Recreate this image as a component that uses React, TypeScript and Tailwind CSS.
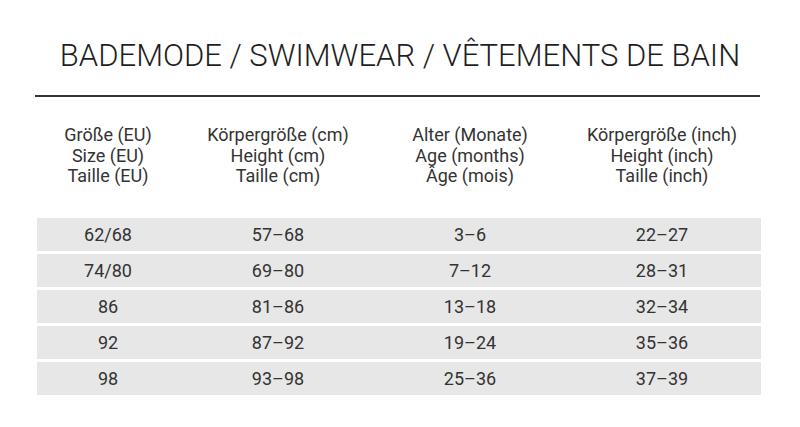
import React from "react";

const rows = [
  ["62/68", "57–68", "3–6", "22–27"],
  ["74/80", "69–80", "7–12", "28–31"],
  ["86", "81–86", "13–18", "32–34"],
  ["92", "87–92", "19–24", "35–36"],
  ["98", "93–98", "25–36", "37–39"],
];

const headers = [
  ["Größe (EU)", "Size (EU)", "Taille (EU)"],
  ["Körpergröße (cm)", "Height (cm)", "Taille (cm)"],
  ["Alter (Monate)", "Age (months)", "Âge (mois)"],
  ["Körpergröße (inch)", "Height (inch)", "Taille (inch)"],
];

const cols = "grid grid-cols-[142px_198px_186px_198px]";

const App = () => {
  return (
    <div className="w-[800px] h-[427px] bg-white font-['Roboto',sans-serif] text-[#333] pt-[38px]">
      <h1 className="text-center text-[31px] leading-[36px] font-light text-[#1f1f1f] tracking-[0px]">
        BADEMODE / SWIMWEAR / VÊTEMENTS DE BAIN
      </h1>
      <div className="ml-[35px] w-[725px] h-[2px] bg-[#333] mt-[21px]" />

      <div className={`${cols} ml-[37px] w-[724px] mt-[28px] text-[18px] leading-[20.5px] text-center`}>
        {headers.map((h, i) => (
          <div key={i} className="flex flex-col">
            {h.map((line) => (
              <span key={line}>{line}</span>
            ))}
          </div>
        ))}
      </div>

      <div className="ml-[37px] w-[724px] mt-[31px] flex flex-col gap-[3px]">
        {rows.map((r) => (
          <div key={r[0]} className={`${cols} h-[33px] bg-[#e7e7e7] text-[18px] text-center items-center`}>
            {r.map((c, i) => (
              <span key={i}>{c}</span>
            ))}
          </div>
        ))}
      </div>
    </div>
  );
};

export default App;
